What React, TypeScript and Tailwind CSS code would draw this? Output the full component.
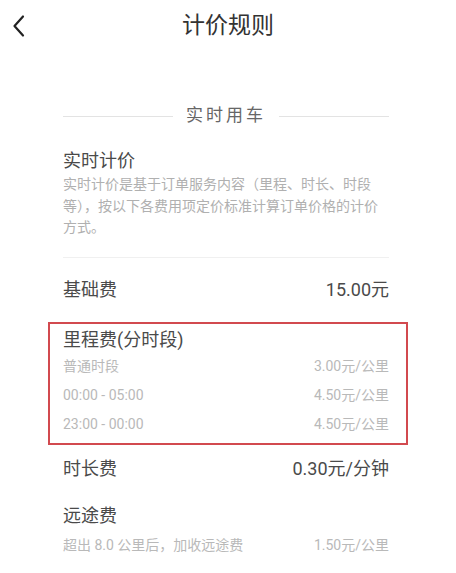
const font = { fontFamily: "Roboto, 'Noto Sans CJK SC', sans-serif" };

function Row({ label, value }: { label: string; value: string }) {
  return (
    <div className="flex h-[29px] items-center justify-between text-[14px] text-[#b9b9b9]">
      <span>{label}</span>
      <span>{value}</span>
    </div>
  );
}

function App() {
  return (
    <div className="min-h-[573px] w-[456px] bg-white" style={font}>
      {/* header */}
      <div className="grid h-[52px] grid-cols-[56px_1fr_56px] items-center">
        <div className="flex items-center pl-[12px]">
          <svg width="14" height="24" viewBox="0 0 14 24" fill="none">
            <path d="M11 2.5 L2.5 12 L11 21.5" stroke="#222" strokeWidth="2.2" strokeLinecap="round" strokeLinejoin="round" />
          </svg>
        </div>
        <div className="text-center text-[23px] text-[#333]">计价规则</div>
        <div />
      </div>

      <div className="ml-[63px] w-[326px]">
        <div className="mt-[48px] flex h-[32px] items-center gap-[13px]">
          <div className="h-px flex-1 bg-[#e3e3e3]" />
          <span className="text-[17px] tracking-[3px] text-[#666]">实时用车</span>
          <div className="h-px flex-1 bg-[#e3e3e3]" />
        </div>

        <div className="mt-[17px] text-[18px] leading-[24px] text-[#4a4a4a]">实时计价</div>
        <p className="mt-[1px] text-[14px] leading-[21.5px] text-[#b0b0b0]">
          实时计价是基于订单服务内容（里程、时长、时段等），按以下各费用项定价标准计算订单价格的计价方式。
        </p>
        <div className="mt-[18px] h-px bg-[#f0f0f0]" />

        <div className="mt-[20px] flex h-[24px] items-center justify-between text-[18px] text-[#4a4a4a]">
          <span>基础费</span>
          <span>15.00元</span>
        </div>
      </div>

      <div className="ml-[48px] mt-[20px] w-[360px] border-2 border-[#d24a4f] pb-[4px] pl-[13px] pr-[17px] pt-[4px]">
        <div className="text-[18px] leading-[24px] text-[#4a4a4a]">里程费(分时段)</div>
        <Row label="普通时段" value="3.00元/公里" />
        <Row label="00:00 - 05:00" value="4.50元/公里" />
        <Row label="23:00 - 00:00" value="4.50元/公里" />
      </div>

      <div className="ml-[63px] w-[326px]">
        <div className="mt-[12px] flex h-[24px] items-center justify-between text-[18px] text-[#4a4a4a]">
          <span>时长费</span>
          <span>0.30元/分钟</span>
        </div>
        <div className="mt-[23px] text-[18px] leading-[24px] text-[#4a4a4a]">远途费</div>
        <div className="mt-[8px] flex h-[20px] items-center justify-between text-[14px] text-[#b9b9b9]">
          <span>超出 8.0 公里后，加收远途费</span>
          <span>1.50元/公里</span>
        </div>
      </div>
    </div>
  );
}

export default App;
